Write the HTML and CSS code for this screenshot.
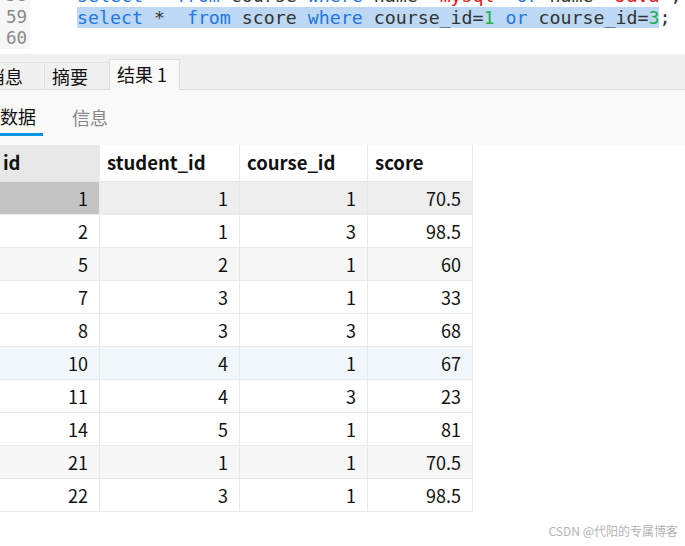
FILE: index.html
```html
<!DOCTYPE html>
<html lang="zh-CN">
<head>
<meta charset="utf-8">
<title>结果 1</title>
<link rel="stylesheet" href="styles.css">
</head>
<body>
<div class="editor">
  <div class="code">
    <div class="line"><span class="ln">58</span><span class="src"><span class="kw">select</span> * <span class="kw">from</span> course <span class="kw">where</span> name=<span class="str">'mysql'</span> <span class="kw">or</span> name=<span class="str">'Java'</span>;</span></div>
    <div class="line"><span class="ln">59</span><span class="src"><span class="sel"><span class="kw">select</span> *  <span class="kw">from</span> score <span class="kw">where</span> course_id=<span class="num">1</span> <span class="kw">or</span> course_id=<span class="num">3</span></span>;</span></div>
    <div class="line"><span class="ln">60</span><span class="src"></span></div>
  </div>
</div>

<div class="tabbar">
  <div class="tab">消息</div>
  <div class="tab">摘要</div>
  <div class="tab active">结果 1</div>
</div>

<div class="subtabs">
  <div class="subtab current">数据</div>
  <div class="subtab">信息</div>
</div>

<div class="grid">
  <div class="row head">
    <div class="cell rowhead">id</div>
    <div class="cell">student_id</div>
    <div class="cell">course_id</div>
    <div class="cell">score</div>
  </div>
  <div class="row selected">
    <div class="cell rowhead">1</div><div class="cell">1</div><div class="cell">1</div><div class="cell">70.5</div>
  </div>
  <div class="row">
    <div class="cell">2</div><div class="cell">1</div><div class="cell">3</div><div class="cell">98.5</div>
  </div>
  <div class="row stripe">
    <div class="cell">5</div><div class="cell">2</div><div class="cell">1</div><div class="cell">60</div>
  </div>
  <div class="row">
    <div class="cell">7</div><div class="cell">3</div><div class="cell">1</div><div class="cell">33</div>
  </div>
  <div class="row">
    <div class="cell">8</div><div class="cell">3</div><div class="cell">3</div><div class="cell">68</div>
  </div>
  <div class="row hover">
    <div class="cell">10</div><div class="cell">4</div><div class="cell">1</div><div class="cell">67</div>
  </div>
  <div class="row">
    <div class="cell">11</div><div class="cell">4</div><div class="cell">3</div><div class="cell">23</div>
  </div>
  <div class="row">
    <div class="cell">14</div><div class="cell">5</div><div class="cell">1</div><div class="cell">81</div>
  </div>
  <div class="row stripe">
    <div class="cell">21</div><div class="cell">1</div><div class="cell">1</div><div class="cell">70.5</div>
  </div>
  <div class="row">
    <div class="cell">22</div><div class="cell">3</div><div class="cell">1</div><div class="cell">98.5</div>
  </div>
</div>

<div class="watermark">CSDN @代阳的专属博客</div>
</body>
</html>
```

FILE: styles.css
```css
html, body {
  margin: 0;
  padding: 0;
}
body {
  width: 685px;
  height: 546px;
  overflow: hidden;
  background: #ffffff;
  position: relative;
  font-family: "Noto Sans CJK SC", "Noto Sans", sans-serif;
  color: #111;
}

/* editor */
.editor {
  height: 54px;
  overflow: hidden;
  background: #ffffff;
}
.code {
  margin-top: -15px;
}
.line {
  display: flex;
  height: 21px;
  line-height: 21px;
  font-family: "DejaVu Sans Mono", "Liberation Mono", monospace;
  font-size: 18.25px;
  color: #333;
  white-space: pre;
}
.line:first-child {
  height: 22px;
}
.ln {
  width: 24px;
  padding-left: 6px;
  background: #f7f7f7;
  color: #8a8a8a;
  font-size: 17.5px;
  flex: none;
}
.src {
  padding-left: 47px;
}
.sel {
  background: #bcd8f5;
}
.kw { color: #1f77e6; }
.str { color: #e5141b; }
.num { color: #1db34b; }

/* result tabs */
.tabbar {
  height: 36px;
  background: #f0f0f0;
  display: flex;
  align-items: flex-end;
  margin-left: -20px;
  position: relative;
}
.tabbar::after {
  content: "";
  position: absolute;
  left: 0;
  right: 0;
  bottom: 0;
  height: 1px;
  background: #dedede;
}
.tab {
  box-sizing: border-box;
  min-width: 65px;
  height: 28px;
  padding: 0 12px 0 7px;
  border-top: 1px solid #e2e2e2;
  border-right: 1px solid #dedede;
  font-size: 18px;
  line-height: 27px;
  color: #111;
  white-space: nowrap;
}
.tab.active {
  height: 31px;
  line-height: 28px;
  background: #f9f9f9;
  border: 1px solid #dedede;
  border-bottom: none;
  margin-left: -1px;
  position: relative;
  z-index: 1;
}

/* sub tabs */
.subtabs {
  height: 55px;
  background: #f9f9f9;
  display: flex;
  gap: 22px;
  margin-left: -7px;
}
.subtab {
  box-sizing: border-box;
  height: 46px;
  padding: 0 7px 7px;
  font-size: 18px;
  line-height: 24px;
  color: #888;
  display: flex;
  align-items: flex-end;
}
.subtab.current {
  color: #111;
  border-bottom: 3px solid #0a96e0;
  padding-bottom: 5px;
}

/* data grid */
.grid {
  margin-left: -4px;
  width: 477px;
}
.row {
  display: grid;
  grid-template-columns: 104px 140px 128px 105px;
  height: 33px;
}
.cell {
  box-sizing: border-box;
  border-right: 1px solid #e9e9e9;
  border-bottom: 1px solid #e9e9e9;
  font-size: 18px;
  line-height: 32px;
  text-align: right;
  padding: 0 11px 0 7px;
  white-space: nowrap;
}
.row.head {
  height: 37px;
}
.row.head .cell {
  text-align: left;
  font-weight: 700;
  font-size: 18.5px;
  line-height: 34px;
  border-bottom-color: #e4e4e4;
}
.row.head .rowhead {
  background: #e8e8e8;
}
.row.selected {
  background: #eeeeee;
}
.row.selected .rowhead {
  background: #c3c3c3;
}
.row.stripe {
  background: #f7f7f7;
}
.row.hover {
  background: #f2f7fc;
}

.watermark {
  position: absolute;
  right: 7px;
  bottom: 7px;
  font-size: 12px;
  color: #b3b3b3;
  font-family: "Noto Sans CJK SC", sans-serif;
}
```
